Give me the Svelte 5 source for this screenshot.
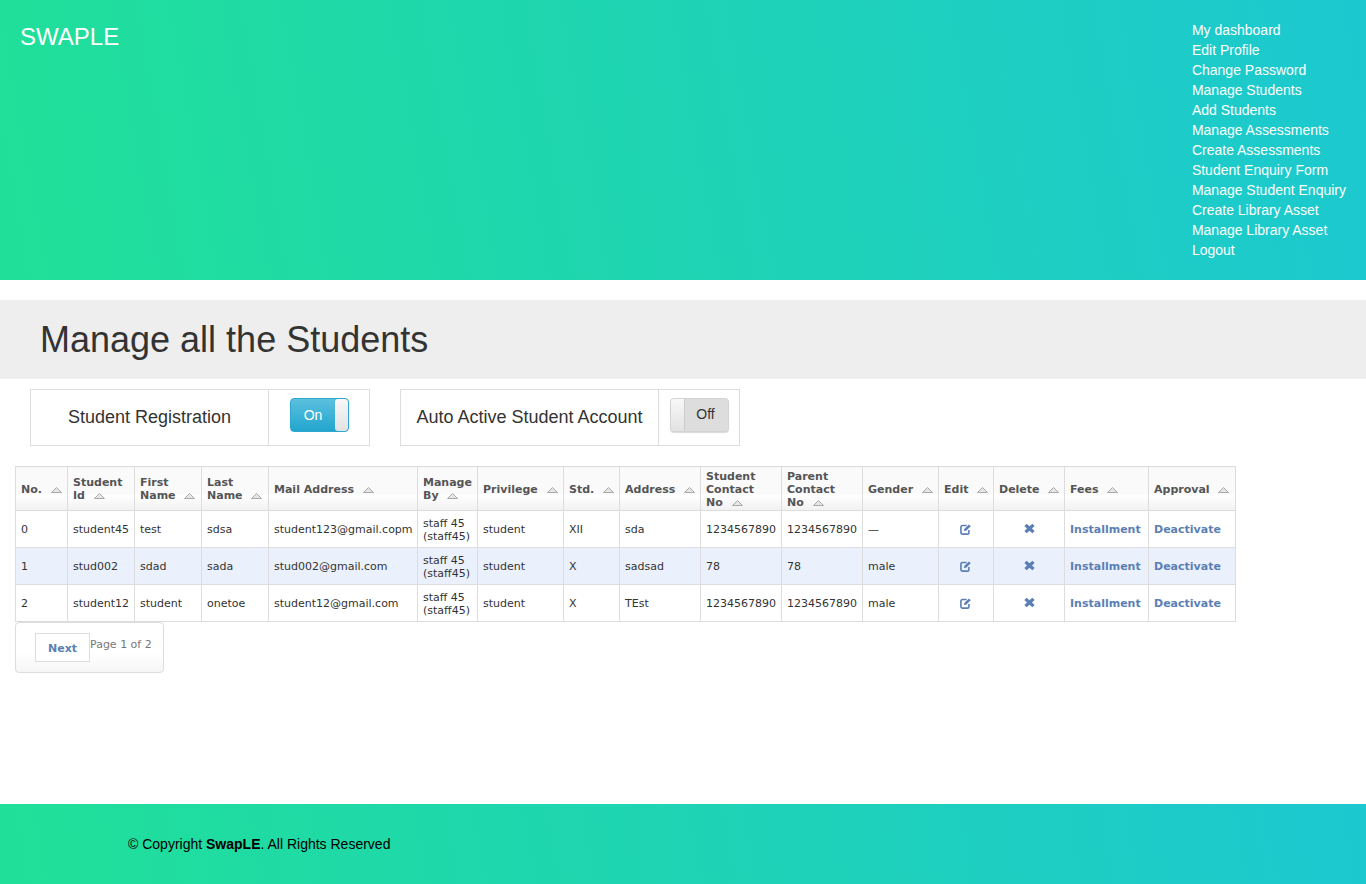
<script>
	const nav = [
		'My dashboard', 'Edit Profile', 'Change Password', 'Manage Students', 'Add Students',
		'Manage Assessments', 'Create Assessments', 'Student Enquiry Form', 'Manage Student Enquiry',
		'Create Library Asset', 'Manage Library Asset', 'Logout'
	];
	const columns = [
		{ label: 'No.', width: 52 },
		{ label: 'Student Id', width: 67, even: true },
		{ label: 'First Name', width: 67, even: true },
		{ label: 'Last Name', width: 67, even: true },
		{ label: 'Mail Address', width: 149 },
		{ label: 'Manage By', width: 60, even: true },
		{ label: 'Privilege', width: 86 },
		{ label: 'Std.', width: 56 },
		{ label: 'Address', width: 81 },
		{ label: 'Student Contact No', width: 81, narrow: true },
		{ label: 'Parent Contact No', width: 81, narrow: true },
		{ label: 'Gender', width: 76 },
		{ label: 'Edit', width: 55 },
		{ label: 'Delete', width: 71 },
		{ label: 'Fees', width: 84 },
		{ label: 'Approval', width: 87 }
	];
	const students = [
		{ id: 'student45', first: 'test', last: 'sdsa', mail: 'student123@gmail.copm', std: 'XII', address: 'sda', contact: '1234567890', parent: '1234567890', gender: '—' },
		{ id: 'stud002', first: 'sdad', last: 'sada', mail: 'stud002@gmail.com', std: 'X', address: 'sadsad', contact: '78', parent: '78', gender: 'male' },
		{ id: 'student12', first: 'student', last: 'onetoe', mail: 'student12@gmail.com', std: 'X', address: 'TEst', contact: '1234567890', parent: '1234567890', gender: 'male' }
	];
</script>

<div class="page">
	<header class="top">
		<a class="logo" href="#top">SWAPLE</a>
		<ul class="nav">
			{#each nav as item}
				<li><a href="#top">{item}</a></li>
			{/each}
		</ul>
	</header>

	<h1 class="title">Manage all the Students</h1>

	<div class="switches">
		<div class="switch-box first">
			<div class="switch-label">Student Registration</div>
			<div class="switch-cell">
				<div class="toggle on"><span class="toggle-text">On</span><span class="knob"></span></div>
			</div>
		</div>
		<div class="switch-box second">
			<div class="switch-label">Auto Active Student Account</div>
			<div class="switch-cell">
				<div class="toggle off"><span class="knob"></span><span class="toggle-text">Off</span></div>
			</div>
		</div>
	</div>

	<table class="grid">
		<colgroup>
			{#each columns as col}
				<col style="width: {col.width}px" />
			{/each}
		</colgroup>
		<thead>
			<tr>
				{#each columns as col}
					<th class:odd={!col.even} class:narrow={col.narrow}>{col.label} <svg class="sort" width="11" height="6" viewBox="0 0 11 6"><path d="M5.5.5 10.5 5.5H.5z" fill="#e6e6e6" stroke="#a9a9a9" /></svg></th>
				{/each}
			</tr>
		</thead>
		<tbody>
			{#each students as s, i}
				<tr class:alt={i === 1}>
					<td>{i}</td>
					<td>{s.id}</td>
					<td>{s.first}</td>
					<td>{s.last}</td>
					<td>{s.mail}</td>
					<td class="staff">staff 45 (staff45)</td>
					<td>student</td>
					<td>{s.std}</td>
					<td>{s.address}</td>
					<td>{s.contact}</td>
					<td>{s.parent}</td>
					<td>{s.gender}</td>
					<td class="icon-cell">
						<svg width="12" height="12" viewBox="0 0 12 12" fill="none">
							<path d="M8.9 7V9.4A1.7 1.7 0 0 1 7.2 11.1H2.6A1.7 1.7 0 0 1 .9 9.4V4.2A1.7 1.7 0 0 1 2.6 2.5H6.6" stroke="#5b7fb5" stroke-width="1.6" />
							<path d="M4 8 4.3 6 8.9 1.4 10.8 3.2 6.1 7.8z" fill="#5b7fb5" />
						</svg>
					</td>
					<td class="icon-cell">
						<svg width="11" height="11" viewBox="0 0 11 11"><path d="M2.6.8 5.5 3.2 8.4.8 10.6 3 8 5.5 10.6 8 8.4 10.2 5.5 7.8 2.6 10.2.4 8 3 5.5.4 3z" fill="#5b7fb5" /></svg>
					</td>
					<td><a class="link" href="#top">Installment</a></td>
					<td><a class="link" href="#top">Deactivate</a></td>
				</tr>
			{/each}
		</tbody>
	</table>

	<div class="pager">
		<a class="next" href="#top">Next</a>
		<span class="page-info">Page 1 of 2</span>
	</div>

	<footer class="bottom">
		<p>© Copyright <strong>SwapLE</strong>. All Rights Reserved</p>
	</footer>
</div>

<style>
	:global(body) {
		margin: 0;
		font-family: "Liberation Sans", Arial, sans-serif;
		color: #333;
	}
	.page {
		display: flex;
		flex-direction: column;
		min-height: 884px;
	}
	.top {
		height: 280px;
		box-sizing: border-box;
		padding: 20px 20px 0;
		display: flex;
		justify-content: space-between;
		align-items: flex-start;
		background: linear-gradient(80deg, #20e098, #1cc8d0);
	}
	.logo {
		color: #fff;
		font-size: 24px;
		line-height: 34px;
		text-decoration: none;
	}
	.nav {
		list-style: none;
		margin: 0;
		padding: 0;
		font-size: 14px;
		line-height: 20px;
	}
	.nav a {
		color: #fff;
		text-decoration: none;
	}
	.title {
		margin: 20px 0 0;
		height: 79px;
		padding-left: 40px;
		background: #eee;
		font-size: 36px;
		font-weight: 400;
		line-height: 79px;
	}
	.switches {
		display: flex;
		gap: 30px;
		margin: 10px 0 20px 30px;
	}
	.switch-box {
		display: flex;
		width: 340px;
		height: 57px;
		box-sizing: border-box;
		border: 1px solid #ddd;
	}
	.switch-label {
		flex: 1;
		text-align: center;
		font-size: 18px;
		line-height: 55px;
		border-right: 1px solid #ddd;
	}
	.switch-cell {
		box-sizing: border-box;
		width: 100px;
		padding: 8px 0 0 21px;
	}
	.second .switch-cell {
		width: 80px;
		padding-left: 11px;
	}
	.toggle {
		width: 59px;
		height: 34px;
		box-sizing: border-box;
		border-radius: 4px;
		display: flex;
		font-size: 14px;
		overflow: hidden;
	}
	.toggle.on {
		background: linear-gradient(#5bc0de, #22a5ce);
		border: 1px solid #2fa8cf;
		color: #fff;
	}
	.toggle.off {
		background: #ddd;
		border: 1px solid #d4d4d4;
		box-shadow: 0 1px 1px rgba(0, 0, 0, 0.15);
		color: #333;
	}
	.toggle-text {
		flex: 1;
		text-align: center;
		line-height: 32px;
	}
	.off .toggle-text {
		line-height: 30px;
		padding-right: 2px;
	}
	.knob {
		width: 13px;
		background: linear-gradient(#f8f8f8, #e2e2e2);
	}
	.on .knob { border-radius: 3px; }
	.off .knob { border-right: 1px solid #ccc; }
	.grid {
		margin-left: 15px;
		width: 1221px;
		table-layout: fixed;
		border-collapse: collapse;
		font-family: "DejaVu Sans", Verdana, sans-serif;
		font-size: 11px;
		line-height: 13px;
		border: 1px solid #ddd;
	}
	.grid th, .grid td {
		border: 1px solid #ddd;
		padding: 0 5px;
		text-align: left;
		overflow: hidden;
	}
	.grid th {
		height: 43px;
		padding-right: 0;
		font-weight: 700;
		color: #555;
		background: linear-gradient(#fafafa 0, #fafafa 62%, #fff 64%, #f1f1f1 100%);
	}
	.grid th.odd {
		height: 41px;
		padding-top: 2px;
	}
	.grid th.narrow { padding-right: 14px; }
	.grid td {
		height: 36px;
		color: #333;
		background: #fff;
	}
	.grid td.staff {
		height: 34px;
		padding-top: 2px;
	}
	.grid tr.alt td { background: #eaf1fc; }
	.sort { margin-left: 5px; }
	.grid td.icon-cell { text-align: center; }
	.icon-cell svg { display: block; margin: -1px auto 0; }
	.link {
		color: #5b7fb5;
		font-weight: 700;
		text-decoration: none;
	}
	.pager {
		margin-left: 15px;
		width: 149px;
		height: 51px;
		box-sizing: border-box;
		border: 1px solid #ddd;
		border-radius: 4px;
		background: linear-gradient(#fff 60%, #f6f6f6);
		padding: 10px 0 0 19px;
		display: flex;
		align-items: flex-start;
		font-family: "DejaVu Sans", Verdana, sans-serif;
		font-size: 11px;
	}
	.next {
		width: 55px;
		height: 29px;
		box-sizing: border-box;
		border: 1px solid #ddd;
		background: #fff;
		color: #5b7fb5;
		font-weight: 700;
		line-height: 29px;
		text-align: center;
		text-decoration: none;
	}
	.page-info {
		color: #777;
		line-height: 24px;
	}
	.bottom {
		margin-top: auto;
		height: 80px;
		background: linear-gradient(80deg, #20e098, #1cc8d0);
		padding-left: 128px;
		font-size: 14px;
		color: #000;
		line-height: 80px;
	}
	.bottom p { margin: 0; }
</style>
